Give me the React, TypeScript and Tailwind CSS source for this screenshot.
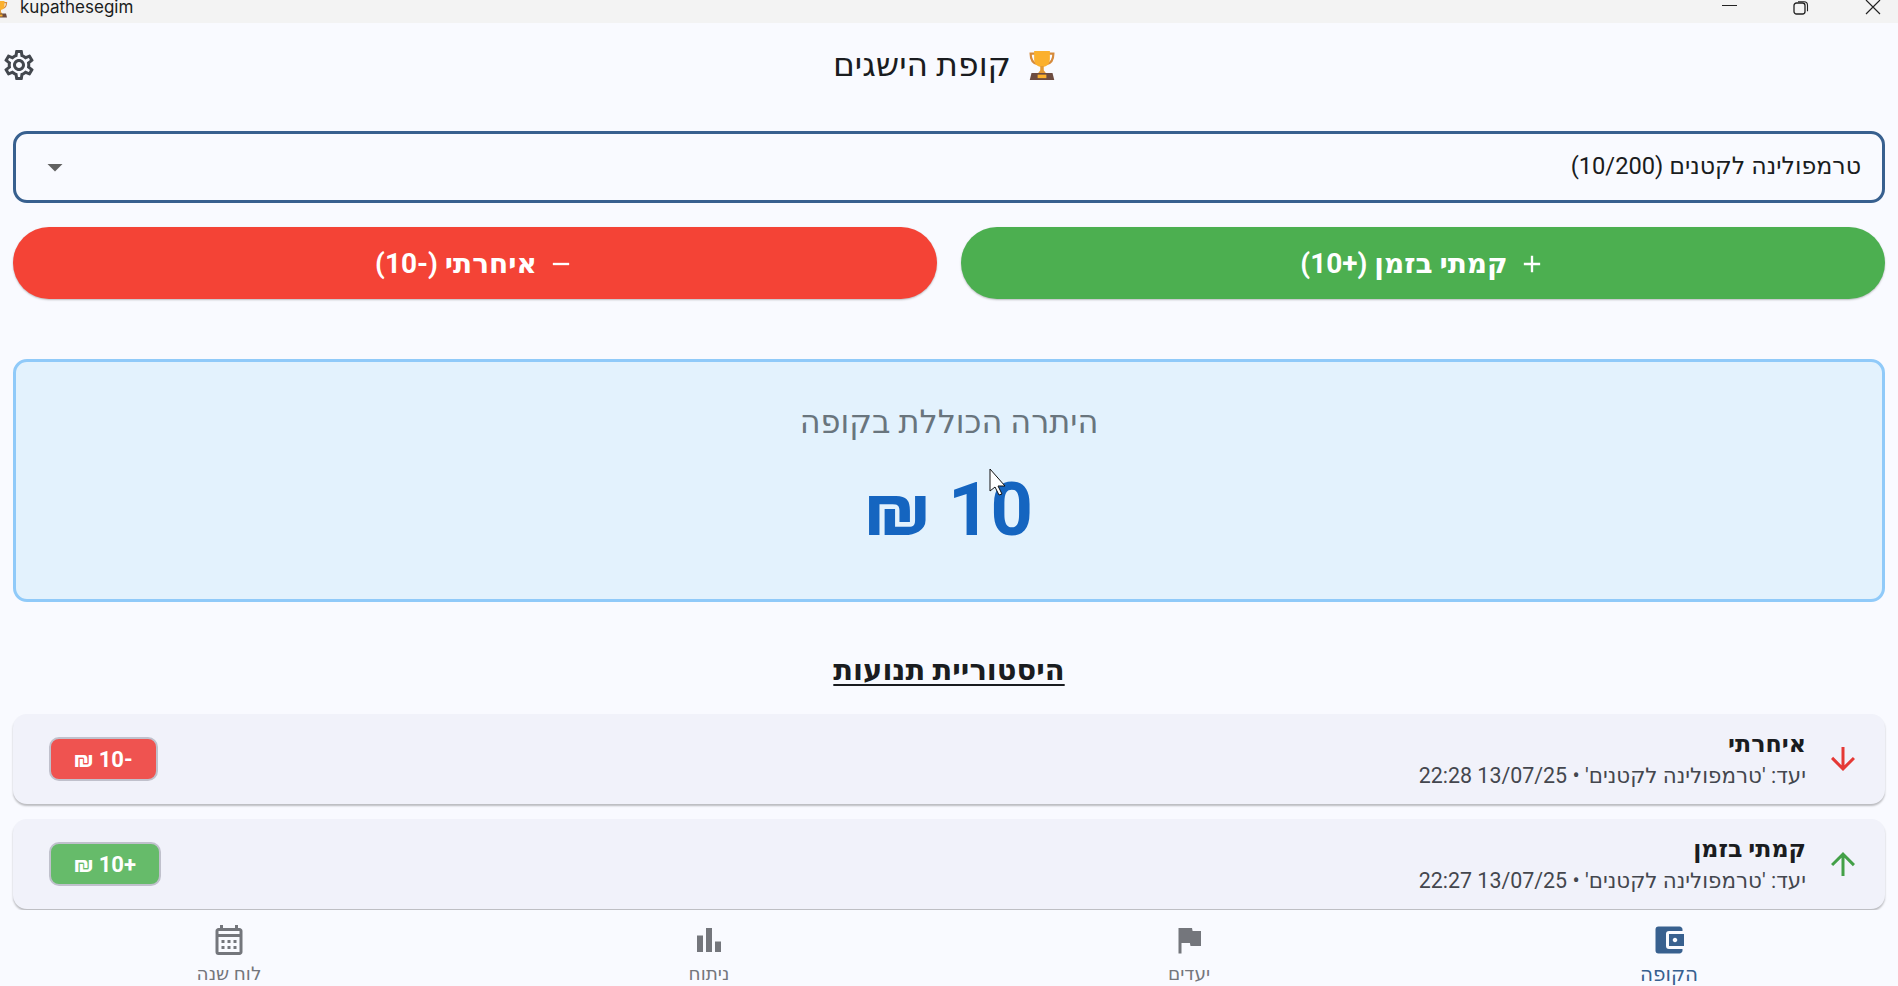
import {
  MdAccountBalanceWallet,
  MdAdd,
  MdArrowDownward,
  MdArrowDropDown,
  MdArrowUpward,
  MdBarChart,
  MdFlag,
  MdOutlineCalendarMonth,
  MdOutlineSettings,
  MdRemove,
} from "react-icons/md";

function Trophy({ className }: { className: string }) {
  return (
    <svg viewBox="0 0 32 36" className={className}>
      <path d="M8 5H3c0 7 3 11 8 12M24 5h5c0 7-3 11-8 12" fill="none" stroke="#d68a3c" strokeWidth="2.5" />
      <path d="M7 2h18v9c0 6-4 9-9 9s-9-3-9-9z" fill="#fbb02d" />
      <path d="M14 19h4v5l3 4H11l3-4z" fill="#e39a35" />
      <path d="M4 27h24l2 8H2z" fill="#6d4c41" />
      <rect x="11" y="29" width="10" height="4" fill="#fbb02d" />
    </svg>
  );
}

function Transaction({ up, title, time, amount }: { up: boolean; title: string; time: string; amount: string }) {
  return (
    <div className="flex h-[90px] shrink-0 items-center rounded-[14px] bg-[#f1f2fa] pr-[24px] pl-[36px] shadow-[0_2px_2px_rgba(0,0,0,0.25)]">
      {up ? <MdArrowUpward className="h-[36px] w-[36px] text-[#43a047]" /> : <MdArrowDownward className="h-[36px] w-[36px] text-[#e53935]" />}
      <div className="mr-[19px] flex-1">
        <p className="text-[23.7px] leading-[30px] font-bold text-[#1a1c20]">{title}</p>
        <p className="mt-[3px] text-[21.4px] leading-[28px] text-[#44474e]">{time}</p>
      </div>
      <span className={`flex h-[44px] items-center rounded-[10px] border-2 border-[#c0c1cc] px-[23px] text-[22px] font-bold text-white ${up ? "bg-[#66bb6a]" : "bg-[#ef5350]"}`}>
        {amount}
      </span>
    </div>
  );
}

function NavItem({ icon, label, active }: { icon: React.ReactNode; label: string; active?: boolean }) {
  return (
    <div className={`flex w-[100px] flex-col items-center ${active ? "text-[#38608f]" : "text-[#74767c]"}`}>
      {icon}
      <span className={`mt-[5px] leading-[22px] ${active ? "text-[20px]" : "text-[18.5px]"}`}>{label}</span>
    </div>
  );
}

export default function App() {
  return (
    <div dir="rtl" className="flex h-[986px] flex-col overflow-hidden bg-[#f9faff] font-['Roboto','Noto_Sans','DejaVu_Sans',sans-serif] text-[#1a1c20]">
      <div dir="ltr" className="flex h-[23px] shrink-0 items-start overflow-hidden bg-[#f3f3f3] text-[17px] leading-[14px] font-['Inter',sans-serif]">
        <Trophy className="ml-[-8px] h-[18px] w-[16px]" />
        <span className="ml-[12px] flex-1">kupathesegim</span>
        <div className="mt-[5px] h-px w-[15px] bg-[#222]" />
        <svg viewBox="0 0 16 14" className="mt-[1px] mr-[56px] ml-[56px] h-[14px] w-[16px]">
          <rect x="1" y="2" width="11" height="11" rx="2.5" fill="none" stroke="#222" strokeWidth="1.3" />
          <path d="M5 0.7h6c2 0 3.5 1.5 3.5 3.5v6" fill="none" stroke="#222" strokeWidth="1.1" />
        </svg>
        <svg viewBox="0 0 16 16" className="mr-[17px] h-[16px] w-[16px]">
          <path d="M1 0l14 14M15 0L1 14" stroke="#222" strokeWidth="1.2" />
        </svg>
      </div>

      <div className="relative flex h-[108px] shrink-0 items-center justify-center gap-[17px] pr-[9px] pb-[25px]">
        <Trophy className="h-[34px] w-[28px]" />
        <h1 className="text-[33px] font-normal">קופת הישגים</h1>
        <MdOutlineSettings className="absolute top-[24px] left-[1px] h-[36px] w-[36px] text-[#43474e]" />
      </div>

      <div className="flex flex-col px-[13px]">
        <div className="flex h-[72px] items-center justify-between rounded-[14px] border-[3px] border-[#38608f] pr-[21px] pl-[21px] text-[23.7px]">
          <span>טרמפולינה לקטנים (10/200)</span>
          <MdArrowDropDown className="h-[36px] w-[36px] text-[#616161]" />
        </div>

        <div className="mt-[24px] flex gap-[24px]">
          <button className="flex h-[72px] flex-1 items-center justify-center gap-[10px] rounded-[36px] bg-[#4caf50] pt-[2px] text-[28px] font-bold text-white shadow-[0_1px_2px_rgba(0,0,0,0.25)]">
            <MdAdd className="h-[28px] w-[28px]" />
            קמתי בזמן (+10)
          </button>
          <button className="flex h-[72px] flex-1 items-center justify-center gap-[10px] rounded-[36px] bg-[#f44336] pt-[2px] text-[28px] font-bold text-white shadow-[0_1px_2px_rgba(0,0,0,0.25)]">
            <MdRemove className="h-[28px] w-[28px]" />
            איחרתי (-10)
          </button>
        </div>

        <div className="relative mt-[60px] flex h-[243px] flex-col items-center rounded-[14px] border-[3px] border-[#90caf9] bg-[#e3f2fd]">
          <p className="mt-[35px] text-[32px] leading-[50px] text-[#69757d]">היתרה הכוללת בקופה</p>
          <p className="mt-[21px] text-[74px] leading-[84px] font-bold text-[#1565c0]">10 ₪</p>
          <svg viewBox="0 0 20 30" className="absolute top-[106px] left-[973px] h-[30px] w-[20px]">
            <path d="M1 1v22l5-4 4 8 3-1-4-8h7z" fill="#fff" stroke="#111" strokeWidth="1" />
          </svg>
        </div>

        <h2 className="mt-[50px] text-center text-[29px] leading-[36px] font-bold underline underline-offset-[4px]">היסטוריית תנועות</h2>

        <div className="mt-[26px] flex flex-col gap-[15px]">
          <Transaction up={false} title="איחרתי" time="יעד: 'טרמפולינה לקטנים' • 13/07/25 22:28" amount="-10 ₪" />
          <Transaction up title="קמתי בזמן" time="יעד: 'טרמפולינה לקטנים' • 13/07/25 22:27" amount="+10 ₪" />
        </div>
      </div>

      <div className="fixed right-0 bottom-0 left-0 flex h-[76px] items-start justify-between bg-[#f9faff] px-[179px] pt-[12px]">
        <NavItem active label="הקופה" icon={<MdAccountBalanceWallet className="h-[36px] w-[36px]" />} />
        <NavItem label="יעדים" icon={<MdFlag className="h-[36px] w-[36px]" />} />
        <NavItem label="ניתוח" icon={<MdBarChart className="h-[36px] w-[36px]" />} />
        <NavItem label="לוח שנה" icon={<MdOutlineCalendarMonth className="h-[36px] w-[36px]" />} />
      </div>
    </div>
  );
}
